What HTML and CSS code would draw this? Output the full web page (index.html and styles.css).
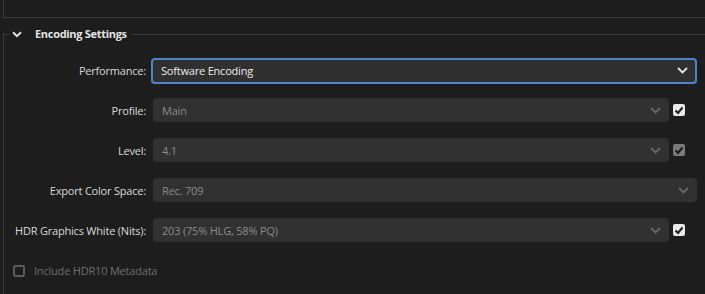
FILE: index.html
```html
<!DOCTYPE html>
<html>
<head>
<meta charset="utf-8">
<link rel="stylesheet" href="styles.css">
</head>
<body>
<div class="top-section"></div>
<div class="group">
  <div class="group-head">
    <span class="seg"></span>
    <svg class="head-chev" width="10" height="7" viewBox="0 0 10 7"><path d="M1 1.2 L5 5.2 L9 1.2" fill="none" stroke="#e0e0e0" stroke-width="2"/></svg>
    <span class="group-title">Encoding Settings</span>
    <span class="rule"></span>
  </div>
  <div class="rows">
    <div class="row row-first">
      <span class="label">Performance:</span>
      <div class="select active"><span class="val">Software Encoding</span>
        <svg class="chev" width="11" height="7" viewBox="0 0 11 7"><path d="M1 1 L5.5 5.5 L10 1" fill="none" stroke="#e6e6e6" stroke-width="1.8"/></svg></div>
    </div>
    <div class="row">
      <span class="label">Profile:</span>
      <div class="select narrow"><span class="val dim">Main</span>
        <svg class="chev" width="11" height="7" viewBox="0 0 11 7"><path d="M1 1 L5.5 5.5 L10 1" fill="none" stroke="#6a6a6a" stroke-width="1.8"/></svg></div>
      <span class="cb on"><svg width="10" height="9" viewBox="0 0 10 9"><path d="M1.5 4.5 L4 7 L8.5 1.5" fill="none" stroke="#1b1b1b" stroke-width="2"/></svg></span>
    </div>
    <div class="row">
      <span class="label">Level:</span>
      <div class="select narrow"><span class="val dim">4.1</span>
        <svg class="chev" width="11" height="7" viewBox="0 0 11 7"><path d="M1 1 L5.5 5.5 L10 1" fill="none" stroke="#6a6a6a" stroke-width="1.8"/></svg></div>
      <span class="cb dis"><svg width="10" height="9" viewBox="0 0 10 9"><path d="M1.5 4.5 L4 7 L8.5 1.5" fill="none" stroke="#1b1b1b" stroke-width="2"/></svg></span>
    </div>
    <div class="row">
      <span class="label">Export Color Space:</span>
      <div class="select wide"><span class="val dim">Rec. 709</span>
        <svg class="chev" width="11" height="7" viewBox="0 0 11 7"><path d="M1 1 L5.5 5.5 L10 1" fill="none" stroke="#6a6a6a" stroke-width="1.8"/></svg></div>
    </div>
    <div class="row">
      <span class="label">HDR Graphics White (Nits):</span>
      <div class="select narrow"><span class="val dim">203 (75% HLG, 58% PQ)</span>
        <svg class="chev" width="11" height="7" viewBox="0 0 11 7"><path d="M1 1 L5.5 5.5 L10 1" fill="none" stroke="#6a6a6a" stroke-width="1.8"/></svg></div>
      <span class="cb on"><svg width="10" height="9" viewBox="0 0 10 9"><path d="M1.5 4.5 L4 7 L8.5 1.5" fill="none" stroke="#1b1b1b" stroke-width="2"/></svg></span>
    </div>
  </div>
  <div class="meta">
    <span class="cb-empty"></span>
    <span class="meta-label">Include HDR10 Metadata</span>
  </div>
</div>
</body>
</html>
```
FILE: styles.css
```css
html, body {
  margin: 0;
  padding: 0;
  background: #1d1d1d;
  width: 705px;
  height: 294px;
  overflow: hidden;
  font-family: "Open Sans", "Liberation Sans", sans-serif;
  font-size: 11px;
  letter-spacing: -0.2px;
  color: #d8d8d8;
}
.top-section {
  margin-left: 3px;
  border-left: 1px solid #3c3c3c;
  border-bottom: 1px solid #3c3c3c;
  box-sizing: border-box;
  height: 18px;
}
.group {
  margin-left: 3px;
  margin-top: 15px;
  border-left: 1px solid #3c3c3c;
  height: 261px;
}
.group-head {
  display: flex;
  align-items: center;
  height: 2px;
}
.seg {
  width: 5px;
  height: 1px;
  background: #3c3c3c;
}
.head-chev {
  margin-left: 3px;
}
.group-title {
  margin-left: 13px;
  font-weight: 700;
  color: #e4e4e4;
  font-size: 11px;
  letter-spacing: -0.3px;
  line-height: 14px;
}
.rule {
  flex: 1;
  height: 1px;
  background: #3c3c3c;
  margin-left: 5px;
}
.rows {
  padding-top: 23px;
  display: flex;
  flex-direction: column;
  gap: 16px;
}
.row {
  display: flex;
  align-items: center;
  height: 24px;
}
.row-first {
  height: 25px;
  margin-bottom: -1px;
}
.label {
  width: 142px;
  text-align: right;
  white-space: nowrap;
  color: #d9d9d9;
}
.select {
  margin-left: 7px;
  height: 24px;
  border-radius: 4px;
  background: #313131;
  display: flex;
  align-items: center;
  justify-content: space-between;
  box-sizing: border-box;
  padding: 0 8px 0 9px;
}
.select.active {
  margin-left: 5px;
  width: 546px;
  height: 26px;
  border: 2px solid #4a87c8;
  border-radius: 4px;
  background: #303030;
  padding: 0 7px 0 8px;
}
.select.narrow { width: 516px; }
.select.wide { width: 544px; }
.val { color: #ececec; }
.val.dim { color: #8b8b8b; }
.cb {
  margin-left: 4px;
  width: 12px;
  height: 12px;
  border-radius: 2px;
  display: flex;
  align-items: center;
  justify-content: center;
}
.cb.on { background: #e8e8e8; }
.cb.dis { background: #7a7a7a; }
.meta {
  margin-top: 21px;
  display: flex;
  align-items: center;
  padding-left: 9px;
}
.cb-empty {
  width: 12px;
  height: 12px;
  box-sizing: border-box;
  border: 2px solid #5a5a5a;
  border-radius: 2px;
}
.meta-label {
  margin-left: 9px;
  color: #6f6f6f;
}
```
